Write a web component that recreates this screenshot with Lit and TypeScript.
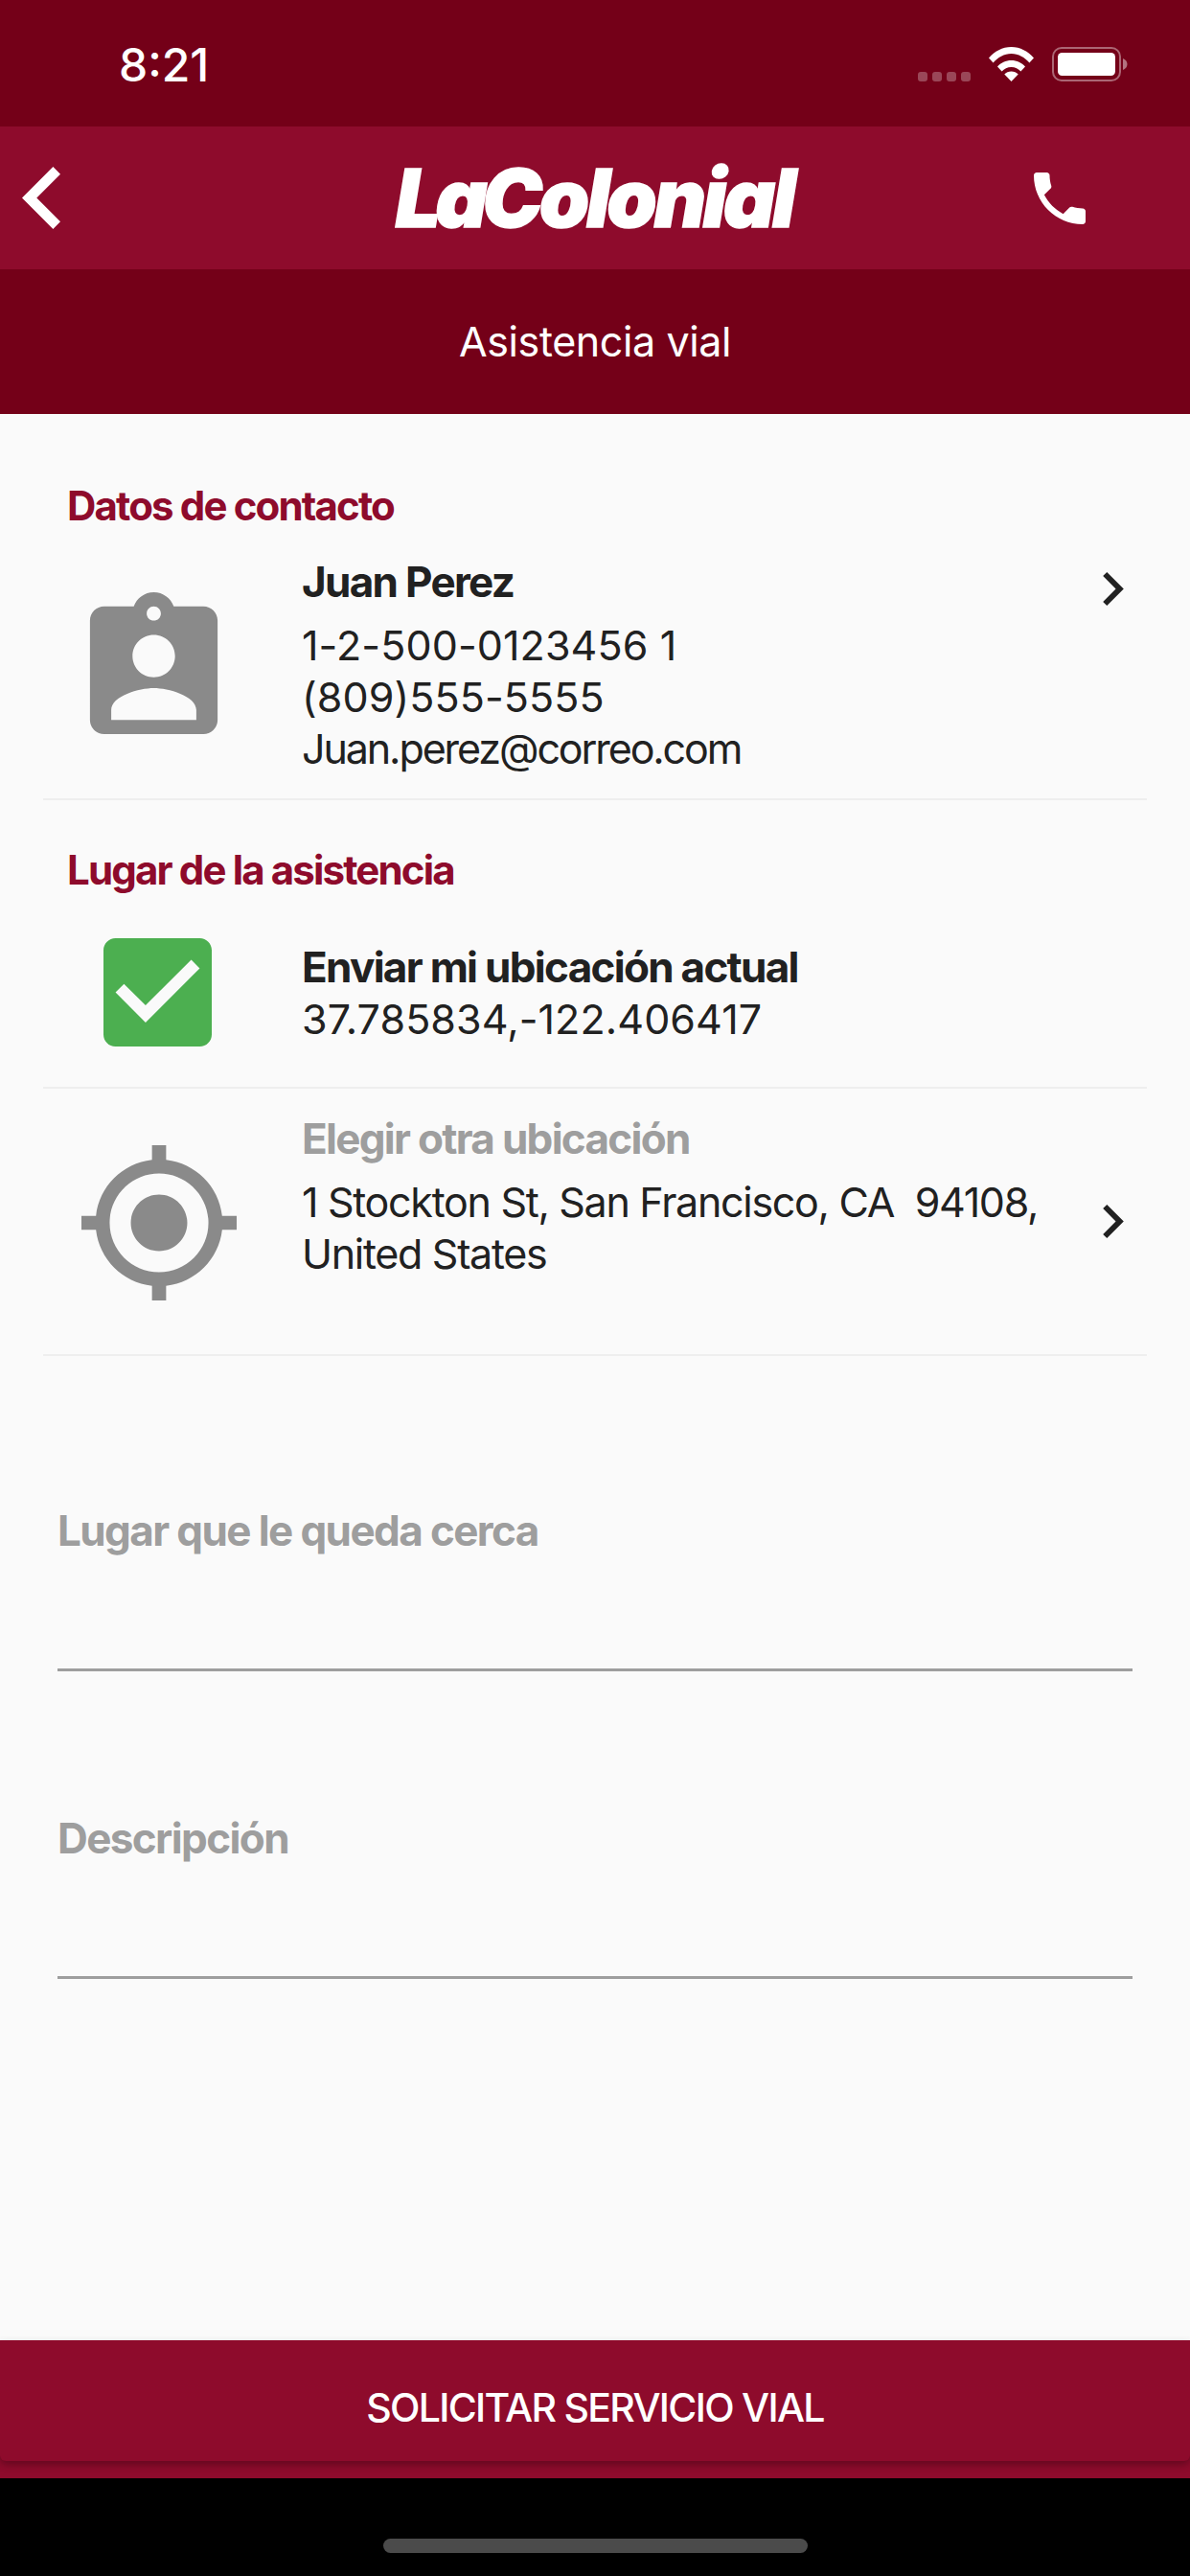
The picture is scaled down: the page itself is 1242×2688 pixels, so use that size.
import { css, html, LitElement, svg } from "lit";
import { customElement } from "lit/decorators.js";

const CHEVRON = svg`<path d="M10 6L8.59 7.41 13.17 12l-4.58 4.59L10 18l6-6z" />`;

@customElement("app-root")
export class AppRoot extends LitElement {
	static override styles = css`
		:host {
			display: block;
			width: 1242px;
			height: 2688px;
			background: #fafafa;
			font-family: Inter, "Noto Sans", sans-serif;
			color: #212121;
		}

		.page {
			display: flex;
			flex-direction: column;
			height: 2688px;
			overflow: hidden;
		}

		svg {
			display: block;
			flex: none;
			fill: currentColor;
		}

		/* status bar */
		.status {
			display: flex;
			align-items: flex-start;
			height: 132px;
			box-sizing: border-box;
			padding: 49px 65px 0 124px;
			background: #740018;
			color: #fff;
		}

		.time {
			flex: 1;
			font-size: 48px;
			font-weight: 500;
			line-height: 38px;
		}

		.signal {
			display: flex;
			gap: 5px;
			margin: 26px 19px 0 0;
		}

		.signal i {
			width: 10px;
			height: 10px;
			border-radius: 3px;
			background: rgba(255, 255, 255, 0.28);
		}

		.wifi {
			margin-right: 19px;
		}

		/* nav bar */
		.nav {
			display: grid;
			grid-template-columns: 198px 1fr 200px;
			align-items: center;
			height: 149px;
			background: #8e0b2c;
			color: #fff;
		}

		.back {
			margin-left: 23px;
		}

		.logo {
			justify-self: center;
			font-size: 84px;
			line-height: 149px;
			font-weight: 900;
			font-style: italic;
			letter-spacing: -5.5px;
			-webkit-text-stroke: 1.5px #fff;
			white-space: nowrap;
		}

		.logo span {
			letter-spacing: -3.4px;
		}

		.call {
			justify-self: end;
			margin-right: 100px;
		}

		.title {
			height: 151px;
			background: #740018;
			color: #fff;
			text-align: center;
			font-size: 43px;
			line-height: 151px;
			letter-spacing: -0.4px;
		}

		/* content */
		.content {
			flex: 1;
			padding: 69px 45px 0;
		}

		h2 {
			margin: 0;
			padding-left: 25px;
			font-size: 42px;
			line-height: 54px;
			font-weight: 700;
			letter-spacing: -1.85px;
			color: #8e0b2c;
		}

		.row {
			display: flex;
			align-items: flex-start;
			border-bottom: 2px solid #eeeeee;
		}

		.lines {
			flex: 1;
			font-size: 43px;
			line-height: 54px;
		}

		.lines b {
			display: block;
			font-size: 44px;
			font-weight: 700;
			letter-spacing: -1.7px;
		}

		.lines span {
			display: block;
			white-space: pre;
		}

		.num {
			letter-spacing: 0.1px;
		}

		.txt {
			letter-spacing: -1.3px;
		}

		.mail {
			letter-spacing: -2.1px;
		}

		.contact {
			padding: 25px 0;
			margin-bottom: 46px;
		}

		.contact .lines b,
		.other .lines b {
			margin-bottom: 12px;
		}

		.contact .icon {
			margin: 38px 87px 0 48px;
			color: #8a8a8a;
		}

		.contact .go {
			margin-top: 17px;
		}

		.current {
			padding: 43px 0 42px;
		}

		.current .icon {
			margin: 1px 94px 0 63px;
			color: #4caf50;
		}

		.current .lines {
			margin-top: 4px;
		}

		.other {
			padding: 25px 0 56px;
		}

		.other .icon {
			margin: 34px 68px 0 40px;
			color: #8a8a8a;
		}

		.other .lines b {
			color: #9e9e9e;
		}

		.other .go {
			margin-top: 96px;
		}

		.go {
			margin-right: 24px;
			color: #212121;
		}

		/* inputs */
		.fields {
			display: flex;
			flex-direction: column;
			gap: 146px;
			margin: 154px 15px 0;
		}

		.field {
			height: 175px;
			box-sizing: border-box;
			border-bottom: 3px solid #9e9e9e;
			font-size: 44px;
			line-height: 56px;
			font-weight: 700;
			letter-spacing: -1.6px;
			color: #9e9e9e;
		}

		/* bottom */
		.bottom {
			height: 144px;
			background: #8e0b2c;
		}

		.submit {
			height: 126px;
			box-sizing: border-box;
			padding-top: 11px;
			border-radius: 0 0 6px 6px;
			background: #8e0b2c;
			box-shadow: 0 4px 8px rgba(0, 0, 0, 0.3);
			color: #fff;
			text-align: center;
			font-size: 41px;
			font-weight: 500;
			line-height: 118px;
			letter-spacing: -1.7px;
		}

		.home {
			display: flex;
			justify-content: center;
			height: 102px;
			box-sizing: border-box;
			padding-top: 63px;
			background: #000;
		}

		.home i {
			width: 443px;
			height: 15px;
			border-radius: 8px;
			background: #4b4b4b;
		}
	`;

	override render() {
		return html`
			<div class="page">
				<div class="status">
					<div class="time">8:21</div>
					<div class="signal"><i></i><i></i><i></i><i></i></div>
					<svg class="wifi" width="47" height="36" viewBox="0 0 47 36">
						<path d="M0 11.5C6 4.5 14.2 0 23.5 0S41 4.5 47 11.5l-4.6 5C37.6 11 31 7 23.5 7S9.4 11 4.6 16.5z" />
						<path d="M9 20.5c3.6-4 8.8-6.5 14.5-6.5S34.4 16.5 38 20.5l-4.6 5c-2.4-2.8-6-4.6-9.9-4.6s-7.5 1.8-9.9 4.6z" />
						<path d="M23.5 36l-7.2-7.6c1.8-1.9 4.4-3 7.2-3s5.4 1.1 7.2 3z" />
					</svg>
					<svg width="79" height="36" viewBox="0 0 79 36">
						<rect x="1" y="1" width="70" height="34" rx="9" fill="none" stroke="#fff" stroke-opacity=".4" stroke-width="2" />
						<rect x="6" y="6" width="60" height="24" rx="4.5" />
						<path d="M74 12c2.5.8 4.5 3.2 4.5 6s-2 5.2-4.5 6z" fill-opacity=".45" />
					</svg>
				</div>

				<div class="nav">
					<svg class="back" width="40" height="65" viewBox="8 6 7.41 12">
						<path d="M15.41 7.41L14 6l-6 6 6 6 1.41-1.41L10.83 12z" />
					</svg>
					<div class="logo">La<span>Colonial</span></div>
					<svg class="call" width="72" height="72" viewBox="0 0 24 24">
						<path d="M6.62 10.79c1.44 2.83 3.76 5.14 6.59 6.59l2.2-2.2c.27-.27.67-.36 1.02-.24 1.12.37 2.33.57 3.57.57.55 0 1 .45 1 1V20c0 .55-.45 1-1 1-9.39 0-17-7.61-17-17 0-.55.45-1 1-1h3.5c.55 0 1 .45 1 1 0 1.25.2 2.45.57 3.57.11.35.03.74-.25 1.02l-2.2 2.2z" />
					</svg>
				</div>

				<div class="title">Asistencia vial</div>

				<div class="content">
					<h2>Datos de contacto</h2>
					<div class="row contact">
						<svg class="icon" width="135" height="148" viewBox="3 1 18 20">
							<path fill-rule="evenodd" d="M19 3h-4.18C14.4 1.84 13.3 1 12 1c-1.3 0-2.4.84-2.82 2H5c-1.1 0-2 .9-2 2v14c0 1.1.9 2 2 2h14c1.1 0 2-.9 2-2V5c0-1.1-.9-2-2-2zm-7 0c.55 0 1 .45 1 1s-.45 1-1 1-1-.45-1-1 .45-1 1-1zm0 4c1.66 0 3 1.34 3 3s-1.34 3-3 3-3-1.34-3-3 1.34-3 3-3zm6 12H6v-1.4c0-2 4-3.1 6-3.1s6 1.1 6 3.1V19z" />
						</svg>
						<div class="lines">
							<b>Juan Perez</b>
							<span class="num">1-2-500-0123456 1</span>
							<span class="num">(809)555-5555</span>
							<span class="mail">Juan.perez@correo.com</span>
						</div>
						<svg class="go" width="22" height="35" viewBox="8.59 6 7.41 12">${CHEVRON}</svg>
					</div>

					<h2>Lugar de la asistencia</h2>
					<div class="row current">
						<svg class="icon" width="113" height="113" viewBox="3 3 18 18">
							<path d="M19 3H5c-1.11 0-2 .9-2 2v14c0 1.1.89 2 2 2h14c1.11 0 2-.9 2-2V5c0-1.1-.89-2-2-2zm-9 14l-5-5 1.41-1.41L10 14.17l7.59-7.59L19 8l-9 9z" />
						</svg>
						<div class="lines">
							<b>Enviar mi ubicación actual</b>
							<span class="num">37.785834,-122.406417</span>
						</div>
					</div>

					<div class="row other">
						<svg class="icon" width="162" height="162" viewBox="1 1 22 22">
							<path d="M12 8c-2.21 0-4 1.79-4 4s1.79 4 4 4 4-1.79 4-4-1.79-4-4-4zm8.94 3c-.46-4.17-3.77-7.48-7.94-7.94V1h-2v2.06C6.83 3.52 3.52 6.83 3.06 11H1v2h2.06c.46 4.17 3.77 7.48 7.94 7.94V23h2v-2.06c4.17-.46 7.48-3.77 7.94-7.94H23v-2h-2.06zM12 19c-3.87 0-7-3.13-7-7s3.13-7 7-7 7 3.13 7 7-3.13 7-7 7z" />
						</svg>
						<div class="lines">
							<b>Elegir otra ubicación</b>
							<span class="txt">1 Stockton St, San Francisco, CA  94108,</span>
							<span class="txt">United States</span>
						</div>
						<svg class="go" width="22" height="35" viewBox="8.59 6 7.41 12">${CHEVRON}</svg>
					</div>

					<div class="fields">
						<div class="field">Lugar que le queda cerca</div>
						<div class="field">Descripción</div>
					</div>
				</div>

				<div class="bottom">
					<div class="submit">SOLICITAR SERVICIO VIAL</div>
				</div>
				<div class="home"><i></i></div>
			</div>
		`;
	}
}
